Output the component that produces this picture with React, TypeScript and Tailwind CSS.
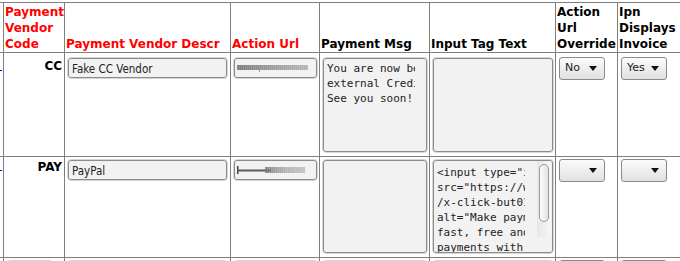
import React from "react";

const sans = { fontFamily: '"DejaVu Sans", Verdana, sans-serif' };
const cond = { fontFamily: '"DejaVu Sans Condensed", "DejaVu Sans", sans-serif', fontStretch: "condensed" as const };
const mono = { fontFamily: '"DejaVu Sans Mono", "Liberation Mono", monospace' };

function Field({ className, children }: { className: string; children?: React.ReactNode }) {
  return (
    <div className={"rounded-[4px] border border-[#d6d6d6] " + className}>
      <div className="h-full w-full overflow-hidden rounded-[3px] border border-[#8c8c8c] bg-[#f2f2f2]">{children}</div>
    </div>
  );
}

function Select({ label }: { label: string }) {
  return (
    <div
      className="ml-[3px] flex h-[23px] w-[46px] items-center justify-between rounded-[3px] border border-[#8a8a8a] bg-linear-to-b from-[#fbfbfb] to-[#e1e1e1] pl-[5px] pr-[7px] text-[11px] text-[#222]"
      style={sans}
    >
      <span>{label}</span>
      <svg width="8" height="5" viewBox="0 0 8 5">
        <path d="M0 0H8L4 5Z" fill="#111" />
      </svg>
    </div>
  );
}

function Garble({ dark }: { dark?: boolean }) {
  return (
    <svg width="74" height="10" viewBox="0 0 74 10" className="ml-[2px] mt-[5px]">
      <defs>
        <linearGradient id={dark ? "g2" : "g1"} x1="0" x2="1" y1="0" y2="0">
          <stop offset="0" stopColor={dark ? "#666" : "#7a7a7a"} />
          <stop offset="0.5" stopColor="#9c9c9c" />
          <stop offset="1" stopColor="#b4b4b4" />
        </linearGradient>
        <pattern id={dark ? "p2" : "p1"} width="2" height="10" patternUnits="userSpaceOnUse">
          <rect x="0" y="0" width="1" height="10" fill="#ffffff" opacity="0.15" />
        </pattern>
      </defs>
      {dark ? (
        <>
          <rect x="0" y="0" width="1.5" height="8" fill="#444" />
          <rect x="0" y="3.5" width="34" height="2" fill="#5a5a5a" />
          <rect x="28" y="1" width="40" height="6" fill="url(#g2)" opacity="0.75" />
          <rect x="28" y="1" width="40" height="6" fill="url(#p2)" />
        </>
      ) : (
        <>
          <rect x="0" y="1" width="71" height="5" fill="url(#g1)" />
          <rect x="0" y="1" width="71" height="5" fill="url(#p1)" />
          <rect x="22" y="6" width="1" height="2" fill="#999" />
        </>
      )}
    </svg>
  );
}

function Head({ children, red }: { children: React.ReactNode; red?: boolean }) {
  return (
    <div
      className={
        "flex flex-col justify-end bg-white pl-px text-[12px] font-bold leading-[16px] " +
        (red ? "text-[#ff0000]" : "text-black")
      }
      style={sans}
    >
      <div>{children}</div>
    </div>
  );
}

const row1Msg = ["You are now being redirected to an", "external Credit Card vendor.", "See you soon!"];
const row2Tag = [
  '<input type="image"',
  'src="https://www.paypal.com/en_US/i/btn',
  '/x-click-but01.gif" name="submit"',
  'alt="Make payments with PayPal - it\'s',
  "fast, free and secure!",
  "payments with PayPal",
];

export default function App() {
  return (
    <div className="h-[261px] w-[680px] overflow-hidden bg-white">
      <div className="pt-[2px]">
        <div className="grid w-max grid-cols-[3px_60px_165px_88px_109px_125px_61px_70px] grid-rows-[49px_103px_100px_30px] gap-px bg-[#7f7f7f] pt-px">
          {/* header */}
          <div className="bg-white" />
          <Head red>Payment Vendor Code</Head>
          <Head red>Payment Vendor Descr</Head>
          <Head red>Action Url</Head>
          <Head>Payment Msg</Head>
          <Head>Input Tag Text</Head>
          <Head>Action Url Override</Head>
          <Head>Ipn Displays Invoice</Head>

          {/* row 1 */}
          <div className="bg-white pt-[17px]">
            <div className="h-px w-[2px] bg-[#0000ee]" />
          </div>
          <div className="bg-white pr-[2px] pt-[6px] text-right text-[12px] font-bold leading-[14px] text-black" style={sans}>
            CC
          </div>
          <div className="bg-white pt-[4px]">
            <Field className="ml-[2px] h-[22px] w-[161px]">
              <div className="pl-[3px] pt-[3px] text-[11.5px] leading-[14px] text-[#222]" style={cond}>
                Fake CC Vendor
              </div>
            </Field>
          </div>
          <div className="bg-white pt-[4px]">
            <Field className="ml-[2px] h-[22px] w-[85px]">
              <Garble />
            </Field>
          </div>
          <div className="bg-white pt-[4px]">
            <Field className="ml-[2px] h-[96px] w-[106px]">
              <div className="ml-[3px] w-[88px] overflow-hidden whitespace-pre pt-[2px] text-[11px] leading-[15px] text-[#222]" style={mono}>
                {row1Msg.join("\n")}
              </div>
            </Field>
          </div>
          <div className="bg-white pt-[4px]">
            <Field className="ml-[2px] h-[96px] w-[122px]" />
          </div>
          <div className="bg-white pt-[4px]">
            <Select label="No" />
          </div>
          <div className="bg-white pt-[4px]">
            <Select label="Yes" />
          </div>

          {/* row 2 */}
          <div className="bg-white pt-[13px]">
            <div className="h-px w-[2px] bg-[#0000ee]" />
          </div>
          <div className="bg-white pr-[2px] pt-[3px] text-right text-[12px] font-bold leading-[14px] text-black" style={sans}>
            PAY
          </div>
          <div className="bg-white pt-[2px]">
            <Field className="ml-[2px] h-[22px] w-[161px]">
              <div className="pl-[3px] pt-[3px] text-[11.5px] leading-[14px] text-[#222]" style={cond}>
                PayPal
              </div>
            </Field>
          </div>
          <div className="bg-white pt-[2px]">
            <Field className="ml-[2px] h-[22px] w-[85px]">
              <Garble dark />
            </Field>
          </div>
          <div className="bg-white pt-[2px]">
            <Field className="ml-[2px] h-[95px] w-[106px]" />
          </div>
          <div className="bg-white pt-[2px]">
            <Field className="ml-[2px] h-[95px] w-[122px]">
              <div className="relative h-full">
                <div className="ml-[3px] w-[88px] overflow-hidden whitespace-pre pt-[4px] text-[11px] leading-[15px] text-[#222]" style={mono}>
                  {row2Tag.join("\n")}
                </div>
                <div className="absolute right-px top-0 h-[76px] w-[14px] bg-linear-to-r from-[#e6e6e6] to-[#f7f7f7]">
                  <div className="mx-[2px] mt-[3px] h-[58px] rounded-full border border-[#9a9a9a] bg-linear-to-r from-[#fbfbfb] to-[#e2e2e2]" />
                </div>
              </div>
            </Field>
          </div>
          <div className="bg-white pt-[2px]">
            <Select label="" />
          </div>
          <div className="bg-white pt-[2px]">
            <Select label="" />
          </div>

          {/* row 3 (partially visible) */}
          <div className="bg-white" />
          <div className="bg-white pt-[2px]">
            <Field className="ml-[2px] h-[22px] w-[47px]" />
          </div>
          <div className="bg-white pt-[2px]">
            <Field className="ml-[2px] h-[22px] w-[161px]" />
          </div>
          <div className="bg-white pt-[2px]">
            <Field className="ml-[2px] h-[22px] w-[85px]" />
          </div>
          <div className="bg-white pt-[2px]">
            <Field className="ml-[2px] h-[22px] w-[106px]" />
          </div>
          <div className="bg-white pt-[2px]">
            <Field className="ml-[2px] h-[22px] w-[122px]" />
          </div>
          <div className="bg-white pt-[2px]">
            <Select label="" />
          </div>
          <div className="bg-white pt-[2px]">
            <Select label="" />
          </div>
        </div>
      </div>
    </div>
  );
}
